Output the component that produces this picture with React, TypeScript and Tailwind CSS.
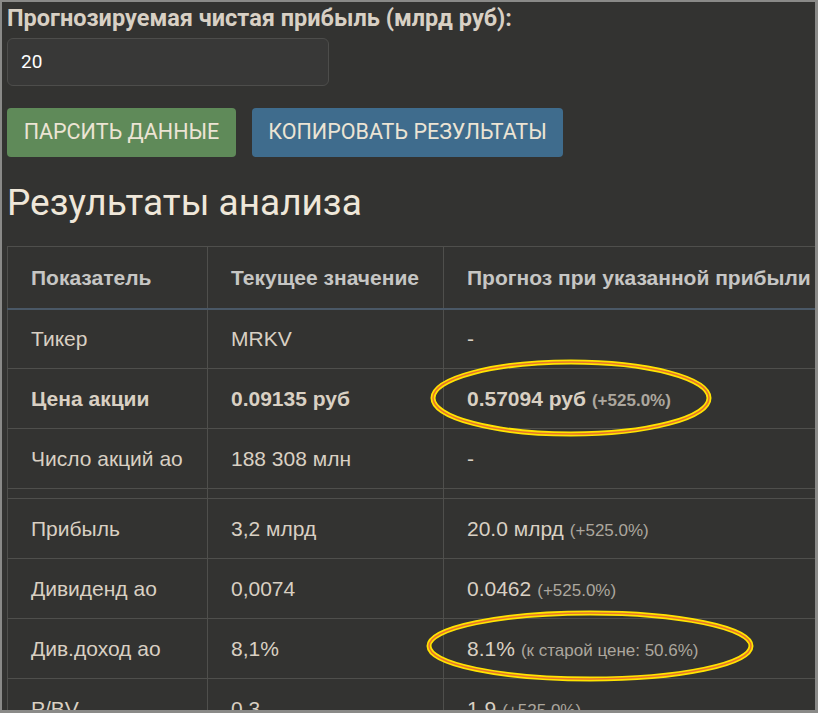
import React from "react";

type Row = {
  label: string;
  current: string;
  forecast: string;
  note?: string;
  bold?: boolean;
};

const ROWS_TOP: Row[] = [
  { label: "Тикер", current: "MRKV", forecast: "-" },
  { label: "Цена акции", current: "0.09135 руб", forecast: "0.57094 руб", note: "(+525.0%)", bold: true },
  { label: "Число акций ао", current: "188 308 млн", forecast: "-" },
];

const ROWS_BOTTOM: Row[] = [
  { label: "Прибыль", current: "3,2 млрд", forecast: "20.0 млрд", note: "(+525.0%)" },
  { label: "Дивиденд ао", current: "0,0074", forecast: "0.0462", note: "(+525.0%)" },
  { label: "Див.доход ао", current: "8,1%", forecast: "8.1%", note: "(к старой цене: 50.6%)" },
  { label: "P/BV", current: "0,3", forecast: "1.9", note: "(+525.0%)" },
];

function BodyRow({ row }: { row: Row }) {
  const weight = row.bold ? "font-bold" : "font-normal";
  return (
    <tr className="h-[60px] border-b border-[#4f4f4c]">
      <td className={`border-r border-[#4f4f4c] pl-[23px] ${weight}`}>{row.label}</td>
      <td className={`border-r border-[#4f4f4c] pl-[23px] ${weight}`}>{row.current}</td>
      <td className="pl-[23px]">
        <span className={weight}>{row.forecast}</span>
        {row.note && (
          <span className={`ml-[6px] text-[17px] text-[#aca79e] ${weight}`}>{row.note}</span>
        )}
      </td>
    </tr>
  );
}

export default function App() {
  return (
    <div className="relative h-[713px] w-[818px] overflow-hidden border-t-2 border-l-2 border-r-[3px] border-b-[3px] border-[#8a8a88] bg-[#333331] font-['Roboto',sans-serif]">
      <div className="pl-[5px]">
        <div className="pt-[2px] text-[23.5px] font-bold leading-[28px] text-[#d8d0c4]">
          Прогнозируемая чистая прибыль (млрд руб):
        </div>
        <div className="mt-[6px] flex h-[48px] w-[322px] items-center rounded-[6px] border border-[#4d4d4b] bg-[#383837] pl-[13px] text-[19px] text-white">
          20
        </div>

        <div className="mt-[22px] flex gap-[16px]">
          <button className="h-[49px] w-[229px] rounded-[4px] bg-[#5f8a59] text-[21.5px] text-[#ece4d4]">
            ПАРСИТЬ ДАННЫЕ
          </button>
          <button className="h-[49px] w-[311px] rounded-[4px] bg-[#3f6c8d] text-[21.5px] text-[#ece4d4]">
            КОПИРОВАТЬ РЕЗУЛЬТАТЫ
          </button>
        </div>

        <h2 className="mt-[23px] text-[37px] leading-[46px] text-[#efe7d9]">Результаты анализа</h2>

        <table className="mt-[20px] w-[900px] border-collapse border-t border-l border-[#4f4f4c] font-['Liberation_Sans',Arial,sans-serif] text-[21px] text-[#d9d0c3]">
          <colgroup>
            <col className="w-[200px]" />
            <col className="w-[236px]" />
            <col />
          </colgroup>
          <thead>
            <tr className="h-[62px] border-b-2 border-[#4a5866] text-left text-[21px] font-bold text-[#c6c6c4]">
              <th className="border-r border-[#4f4f4c] pl-[23px]">Показатель</th>
              <th className="border-r border-[#4f4f4c] pl-[23px]">Текущее значение</th>
              <th className="pl-[23px]">Прогноз при указанной прибыли</th>
            </tr>
          </thead>
          <tbody>
            {ROWS_TOP.map((r) => (
              <BodyRow key={r.label} row={r} />
            ))}
            <tr className="h-[10px] border-b border-[#4f4f4c]">
              <td className="border-r border-[#4f4f4c]" />
              <td className="border-r border-[#4f4f4c]" />
              <td />
            </tr>
            {ROWS_BOTTOM.map((r) => (
              <BodyRow key={r.label} row={r} />
            ))}
          </tbody>
        </table>
      </div>

      {/* highlight marks */}
      <svg className="pointer-events-none absolute left-[-2px] top-[-2px]" width="818" height="713">
        <g fill="none">
          <ellipse cx="571" cy="398" rx="138" ry="36" stroke="#ffe400" strokeWidth="5" />
          <ellipse cx="571" cy="398" rx="138" ry="36" stroke="#e8742a" strokeWidth="1.5" />
          <ellipse cx="590" cy="646" rx="161" ry="33" stroke="#ffe400" strokeWidth="5" />
          <ellipse cx="590" cy="646" rx="161" ry="33" stroke="#e8742a" strokeWidth="1.5" />
        </g>
      </svg>
    </div>
  );
}
